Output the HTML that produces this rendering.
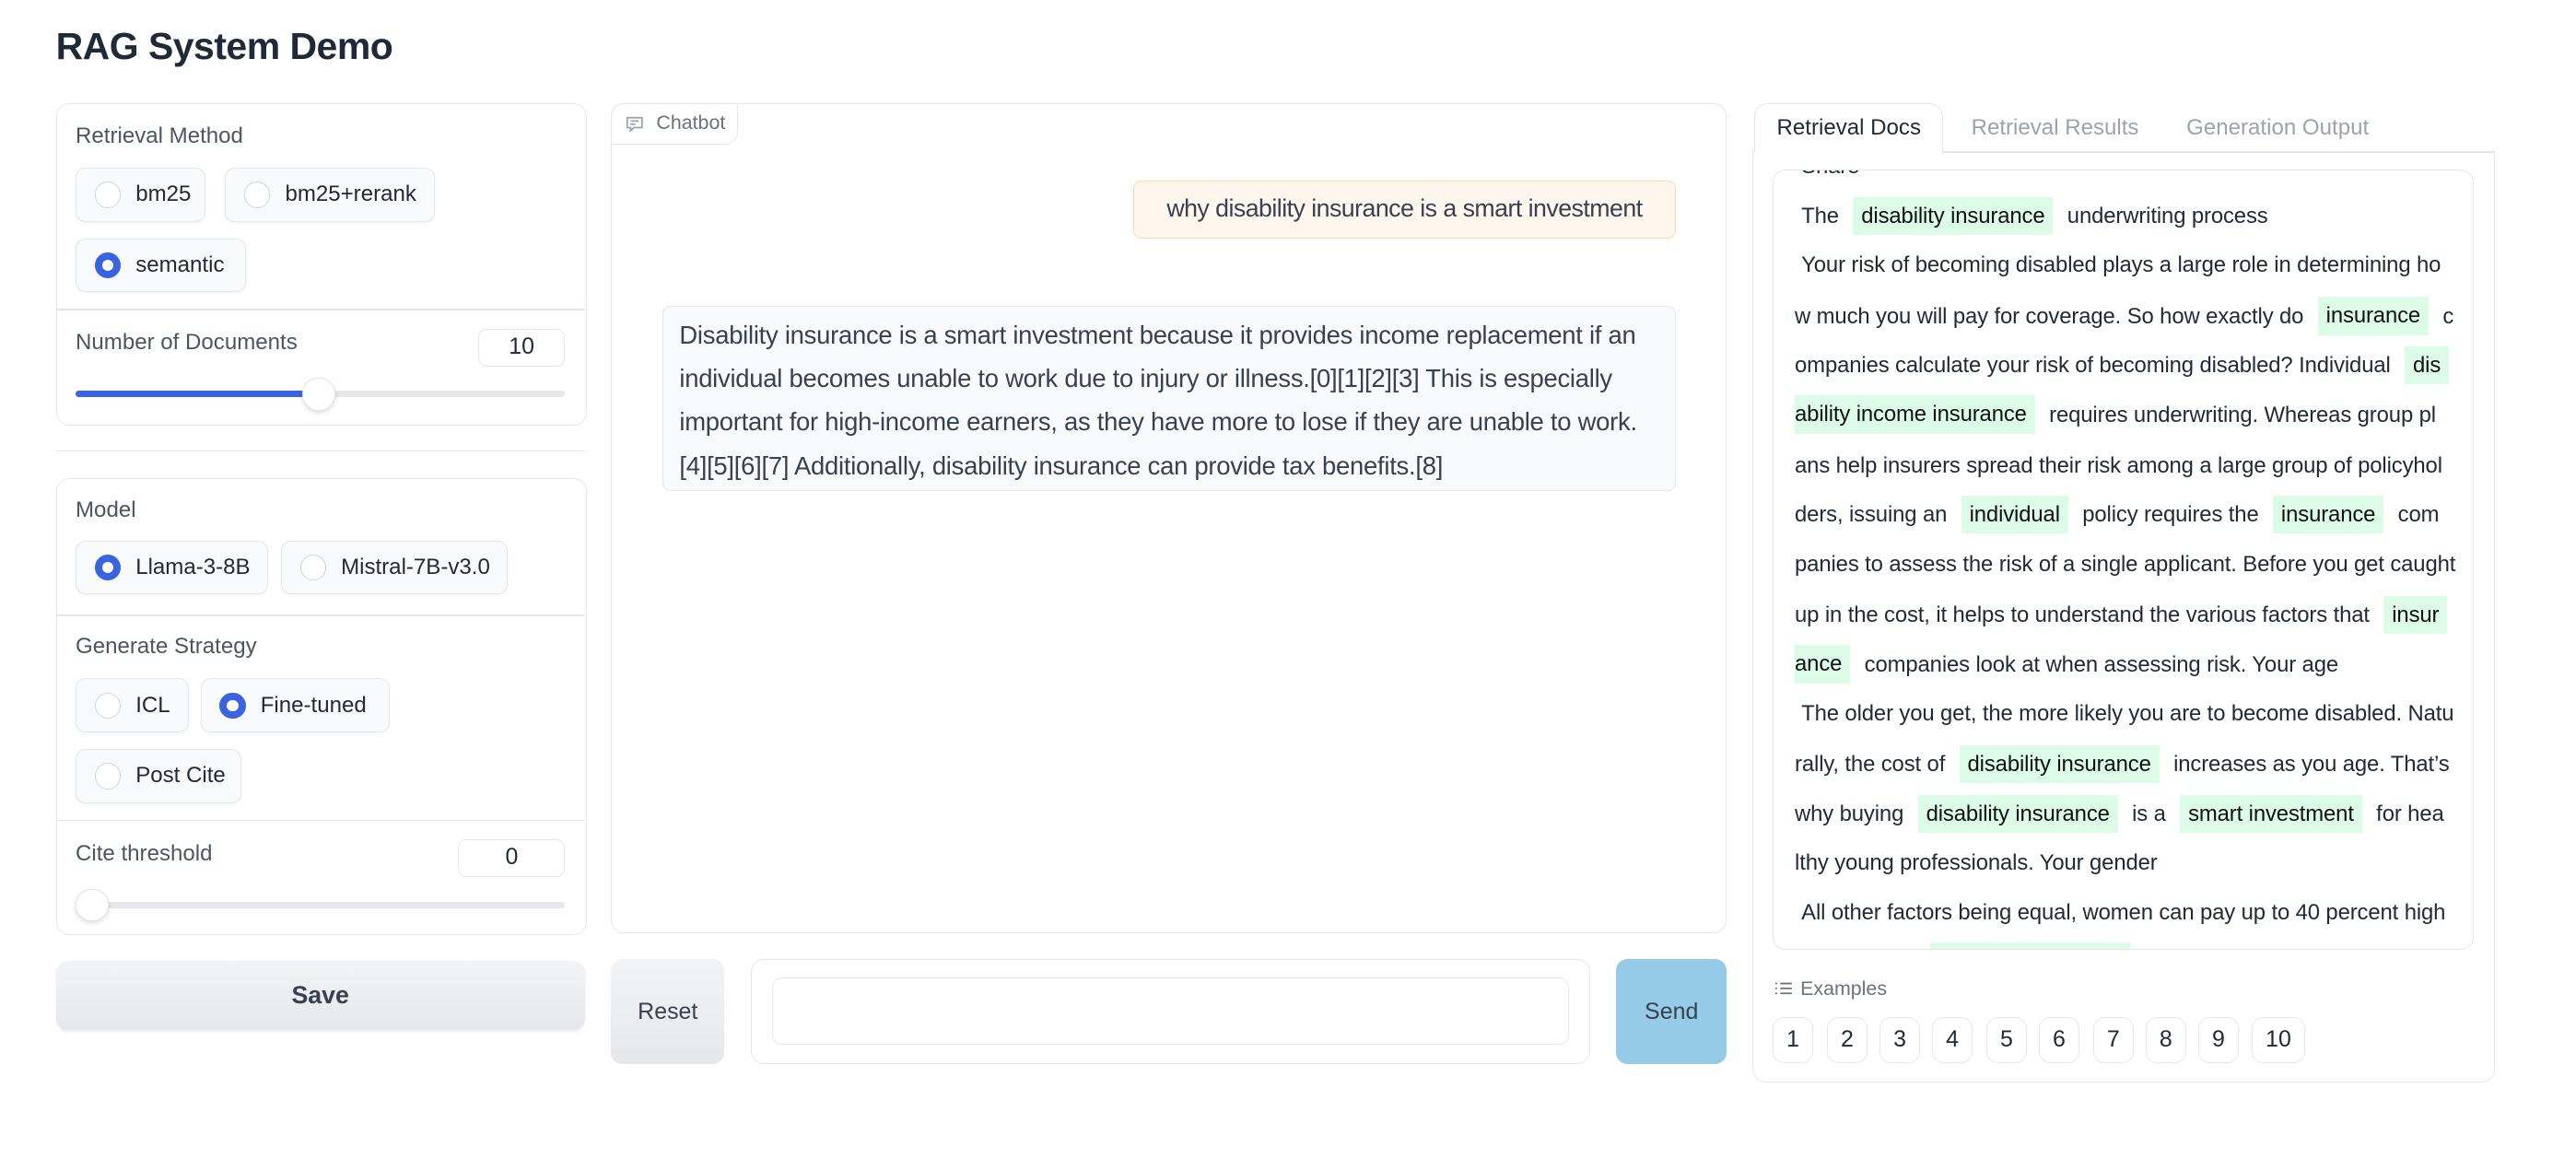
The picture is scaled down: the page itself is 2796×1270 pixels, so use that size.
<!DOCTYPE html>
<html><head><meta charset="utf-8"><style>
html{zoom:1.783}
body{margin:0;width:1568px;height:712px;background:#fff;font-family:"Liberation Sans",sans-serif;color:#1f2937;position:relative;overflow:hidden}
.a{position:absolute}
.panel{position:absolute;border:1px solid #e5e7eb;border-radius:8px;background:#fff;box-sizing:border-box}
.lbl{position:absolute;font-size:13.5px;color:#4b5563}
.rad{position:absolute;height:33px;border:1px solid #e5e7eb;border-radius:6px;background:#f9fafb;box-sizing:border-box;font-size:13.5px;display:flex;align-items:center;box-shadow:0 1px 2px rgba(0,0,0,.04)}
.rad i{display:inline-block;width:16px;height:16px;border-radius:50%;border:1px solid #d1d5db;box-sizing:border-box;margin:0 9px 0 11px;background:#fff}
.rad i.on{background:#fff;border:5px solid #3b63e0}
.hr{position:absolute;height:1px;background:#e5e7eb}
.num{position:absolute;height:23px;border:1px solid #e5e7eb;border-radius:5px;box-sizing:border-box;font-size:14px;text-align:center;line-height:21px}
.track{position:absolute;height:4px;background:#e5e7eb;border-radius:2px}
.thumb{position:absolute;width:20px;height:20px;border-radius:50%;background:#fff;border:1px solid #e5e7eb;box-shadow:0 1px 3px rgba(0,0,0,.15);box-sizing:border-box}
.doc{position:absolute;left:1092px;font-size:13.4px;color:#1f2937;white-space:nowrap;height:30px;line-height:30px;letter-spacing:-0.07px}
.h{background:#dcfce7;padding:4px 5px;margin:0 5px;color:#111}
.ex{position:absolute;top:619px;height:28px;border:1px solid #e5e7eb;border-radius:7px;box-sizing:border-box;font-size:14px;text-align:center;line-height:26px}
</style></head><body>
<div class="a" style="left:34px;top:15px;font-size:23px;font-weight:bold;color:#1f2937;letter-spacing:-0.3px">RAG System Demo</div>

<div class="panel" style="left:34px;top:63px;width:323px;height:196px"></div>
<div class="lbl" style="left:46px;top:75px">Retrieval Method</div>
<div class="rad" style="left:46px;top:102px;width:79px"><i></i>bm25</div>
<div class="rad" style="left:137px;top:102px;width:128px"><i></i>bm25+rerank</div>
<div class="rad" style="left:46px;top:145px;width:104px"><i class="on"></i>semantic</div>
<div class="hr" style="left:35px;top:188px;width:321px"></div>
<div class="lbl" style="left:46px;top:201px">Number of Documents</div>
<div class="num" style="left:291px;top:200px;width:53px">10</div>
<div class="track" style="left:46px;top:238px;width:298px"></div>
<div class="track" style="left:46px;top:238px;width:148px;background:#3b63e0"></div>
<div class="thumb" style="left:184px;top:230px"></div>

<div class="hr" style="left:34px;top:274px;width:322px"></div>

<div class="panel" style="left:34px;top:291px;width:323px;height:278px"></div>
<div class="lbl" style="left:46px;top:303px">Model</div>
<div class="rad" style="left:46px;top:329px;width:117px"><i class="on"></i>Llama-3-8B</div>
<div class="rad" style="left:171px;top:329px;width:138px"><i></i>Mistral-7B-v3.0</div>
<div class="hr" style="left:35px;top:374px;width:321px"></div>
<div class="lbl" style="left:46px;top:386px">Generate Strategy</div>
<div class="rad" style="left:46px;top:413px;width:69px"><i></i>ICL</div>
<div class="rad" style="left:122px;top:413px;width:115px"><i class="on"></i>Fine-tuned</div>
<div class="rad" style="left:46px;top:456px;width:101px"><i></i>Post Cite</div>
<div class="hr" style="left:35px;top:499px;width:321px"></div>
<div class="lbl" style="left:46px;top:512px">Cite threshold</div>
<div class="num" style="left:279px;top:511px;width:65px">0</div>
<div class="track" style="left:46px;top:549px;width:298px"></div>
<div class="thumb" style="left:46px;top:541px"></div>

<div class="a" style="left:34px;top:585px;width:322px;height:42px;border-radius:7px;background:linear-gradient(#f3f4f6,#e5e7eb);box-shadow:0 1px 2px rgba(0,0,0,.08);font-size:15px;font-weight:bold;color:#374151;text-align:center;line-height:42px">Save</div>

<div class="panel" style="left:372px;top:63px;width:679px;height:505px"></div>
<div class="a" style="left:372px;top:63px;width:77px;height:25px;border:1px solid #e5e7eb;border-radius:8px 0 8px 0;box-sizing:border-box;font-size:12px;color:#6b7280;line-height:23px;padding-left:27px">
<svg class="a" style="left:8px;top:7px" width="11" height="10" viewBox="0 0 11 10"><path d="M1 1h9v6H5l-2 2V7H1z M3 3h5 M3 5h3" fill="none" stroke="#9ca3af" stroke-width="1"/></svg>Chatbot</div>
<div class="a" style="left:690px;top:110px;width:330px;height:35px;background:#fff7ed;border:1px solid #fed7aa;border-radius:5px;box-sizing:border-box;font-size:15px;color:#374151;line-height:33px;text-align:center;letter-spacing:-0.3px">why disability insurance is a smart investment</div>
<div class="a" style="left:403px;top:186px;width:617px;height:113px;background:#f9fafb;border:1px solid #e5e7eb;border-radius:5px;box-sizing:border-box;font-size:15.4px;color:#374151;line-height:26.5px;padding:4px 10px;letter-spacing:-0.15px;white-space:nowrap">Disability insurance is a smart investment because it provides income replacement if an<br>individual becomes unable to work due to injury or illness.[0][1][2][3] This is especially<br>important for high-income earners, as they have more to lose if they are unable to work.<br>[4][5][6][7] Additionally, disability insurance can provide tax benefits.[8]</div>

<div class="a" style="left:372px;top:584px;width:69px;height:64px;border-radius:7px;background:linear-gradient(#f3f4f6,#e5e7eb);font-size:14px;color:#374151;text-align:center;line-height:64px">Reset</div>
<div class="panel" style="left:457px;top:584px;width:511px;height:64px"></div>
<div class="a" style="left:470px;top:595px;width:485px;height:41px;border:1px solid #e5e7eb;border-radius:6px;box-sizing:border-box"></div>
<div class="a" style="left:984px;top:584px;width:67px;height:64px;border-radius:7px;background:#95cbe6;font-size:14px;color:#374151;text-align:center;line-height:64px">Send</div>

<div class="panel" style="left:1067px;top:92px;width:452px;height:567px;border-top:none;border-radius:0 0 8px 8px"></div>
<div class="hr" style="left:1182px;top:92px;width:337px"></div>
<div class="a" style="left:1068px;top:63px;width:115px;height:30px;border:1px solid #e5e7eb;border-bottom:none;border-radius:8px 8px 0 0;background:#fff;box-sizing:border-box;font-size:13.5px;text-align:center;line-height:29px">Retrieval Docs</div>
<div class="a" style="left:1200px;top:70px;font-size:13.5px;color:#9ca3af">Retrieval Results</div>
<div class="a" style="left:1331px;top:70px;font-size:13.5px;color:#9ca3af">Generation Output</div>

<div class="panel" style="left:1079px;top:103px;width:427px;height:475px;overflow:hidden">
<div style="position:absolute;left:-1079px;top:-103px;width:1600px;height:700px">
<div class="doc" style="top:86px;left:1096px">Share</div>
<div class="doc" style="top:116px;left:1096px">The <span class="h">disability insurance</span> underwriting process</div>
<div class="doc" style="top:146px;left:1096px">Your risk of becoming disabled plays a large role in determining ho</div>
<div class="doc" style="top:177px">w much you will pay for coverage. So how exactly do <span class="h">insurance</span> c</div>
<div class="doc" style="top:207px">ompanies calculate your risk of becoming disabled? Individual <span class="h" style="margin-right:0">dis</span></div>
<div class="doc" style="top:237px"><span class="h" style="margin-left:0;padding-left:0">ability income insurance</span> requires underwriting. Whereas group pl</div>
<div class="doc" style="top:268px">ans help insurers spread their risk among a large group of policyhol</div>
<div class="doc" style="top:298px">ders, issuing an <span class="h">individual</span> policy requires the <span class="h">insurance</span> com</div>
<div class="doc" style="top:328px">panies to assess the risk of a single applicant. Before you get caught</div>
<div class="doc" style="top:359px">up in the cost, it helps to understand the various factors that <span class="h" style="margin-right:0">insur</span></div>
<div class="doc" style="top:389px"><span class="h" style="margin-left:0;padding-left:0">ance</span> companies look at when assessing risk. Your age</div>
<div class="doc" style="top:419px;left:1096px">The older you get, the more likely you are to become disabled. Natu</div>
<div class="doc" style="top:450px">rally, the cost of <span class="h">disability insurance</span> increases as you age. That’s</div>
<div class="doc" style="top:480px">why buying <span class="h">disability insurance</span> is a <span class="h">smart investment</span> for hea</div>
<div class="doc" style="top:510px">lthy young professionals. Your gender</div>
<div class="doc" style="top:540px;left:1096px">All other factors being equal, women can pay up to 40 percent high</div>
<div class="doc" style="top:570px">er premiums <span class="h">disability insurance</span></div>
</div></div>

<svg class="a" style="left:1081px;top:597px" width="10" height="10" viewBox="0 0 10 10"><path d="M0 2h1M3 2h7M0 5h1M3 5h7M0 8h1M3 8h7" stroke="#6b7280" stroke-width="1"/></svg>
<div class="a" style="left:1096px;top:595px;font-size:12px;color:#6b7280">Examples</div>
<div class="ex" style="left:1079px;width:25px">1</div>
<div class="ex" style="left:1112px;width:25px">2</div>
<div class="ex" style="left:1144px;width:25px">3</div>
<div class="ex" style="left:1176px;width:25px">4</div>
<div class="ex" style="left:1209px;width:25px">5</div>
<div class="ex" style="left:1241px;width:25px">6</div>
<div class="ex" style="left:1274px;width:25px">7</div>
<div class="ex" style="left:1306px;width:25px">8</div>
<div class="ex" style="left:1338px;width:25px">9</div>
<div class="ex" style="left:1371px;width:32px">10</div>
</body></html>
